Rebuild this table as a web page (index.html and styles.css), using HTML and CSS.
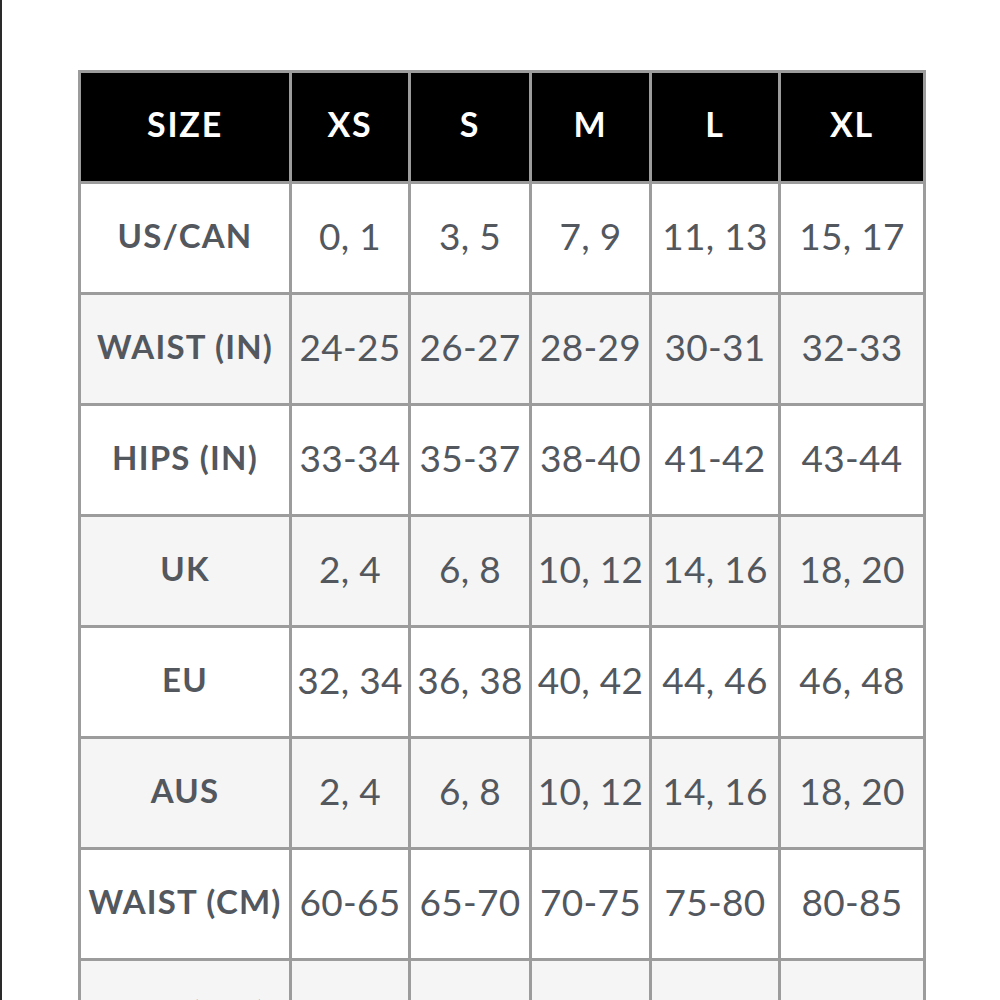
FILE: index.html
```html
<!DOCTYPE html>
<html lang="en">
<head>
<meta charset="utf-8">
<title>Size Chart</title>
<link rel="stylesheet" href="styles.css">
</head>
<body>
<div class="page">
  <table class="chart">
    <colgroup>
      <col class="c-label">
      <col class="c-xs">
      <col class="c-s">
      <col class="c-m">
      <col class="c-l">
      <col class="c-xl">
    </colgroup>
    <thead>
      <tr><th>SIZE</th><th>XS</th><th>S</th><th>M</th><th>L</th><th>XL</th></tr>
    </thead>
    <tbody>
      <tr><th>US/CAN</th><td>0, 1</td><td>3, 5</td><td>7, 9</td><td>11, 13</td><td>15, 17</td></tr>
      <tr><th>WAIST (IN)</th><td>24-25</td><td>26-27</td><td>28-29</td><td>30-31</td><td>32-33</td></tr>
      <tr><th>HIPS (IN)</th><td>33-34</td><td>35-37</td><td>38-40</td><td>41-42</td><td>43-44</td></tr>
      <tr><th>UK</th><td>2, 4</td><td>6, 8</td><td>10, 12</td><td>14, 16</td><td>18, 20</td></tr>
      <tr><th>EU</th><td>32, 34</td><td>36, 38</td><td>40, 42</td><td>44, 46</td><td>46, 48</td></tr>
      <tr><th>AUS</th><td>2, 4</td><td>6, 8</td><td>10, 12</td><td>14, 16</td><td>18, 20</td></tr>
      <tr><th>WAIST (CM)</th><td>60-65</td><td>65-70</td><td>70-75</td><td>75-80</td><td>80-85</td></tr>
      <tr><th>HIPS (CM)</th><td>84-89</td><td>89-94</td><td>94-99</td><td>99-104</td><td>104-109</td></tr>
    </tbody>
  </table>
</div>
</body>
</html>
```

FILE: styles.css
```css
html, body {
  margin: 0;
  padding: 0;
  background: #ffffff;
}

body {
  height: 1000px;
  overflow: hidden;
}

.page {
  border-left: 2px solid #2a2a2a;
  min-height: 1000px;
  padding: 70px 0 0 76px;
  box-sizing: border-box;
}

.chart {
  border-collapse: collapse;
  table-layout: fixed;
  width: 845px;
  border: 3px solid #9c9c9c;
  font-family: "Lato", "Open Sans", sans-serif;
  color: #53575e;
}

.c-label { width: 211px; }
.c-xs { width: 119px; }
.c-s { width: 121px; }
.c-m { width: 120px; }
.c-l { width: 129px; }
.c-xl { width: 145px; }

.chart th,
.chart td {
  border: 3px solid #9c9c9c;
  height: 108px;
  padding: 0;
  text-align: center;
  vertical-align: middle;
  white-space: nowrap;
  overflow: hidden;
}

.chart td {
  height: 103px;
  padding-bottom: 5px;
}

.chart th {
  height: 101px;
  padding-bottom: 7px;
  font-family: "Lato", sans-serif;
  font-weight: 700;
}

.chart thead th {
  background: #000000;
  color: #ffffff;
  font-size: 34px;
  letter-spacing: 1.8px;
}

.chart tbody th {
  height: 102px;
  padding-bottom: 6px;
  font-size: 33px;
  letter-spacing: 1.2px;
}

.chart tbody td {
  font-size: 37px;
  font-weight: 400;
  letter-spacing: 0.3px;
}

.chart tbody tr:nth-child(even) th,
.chart tbody tr:nth-child(even) td {
  background: #f5f5f5;
}
```
